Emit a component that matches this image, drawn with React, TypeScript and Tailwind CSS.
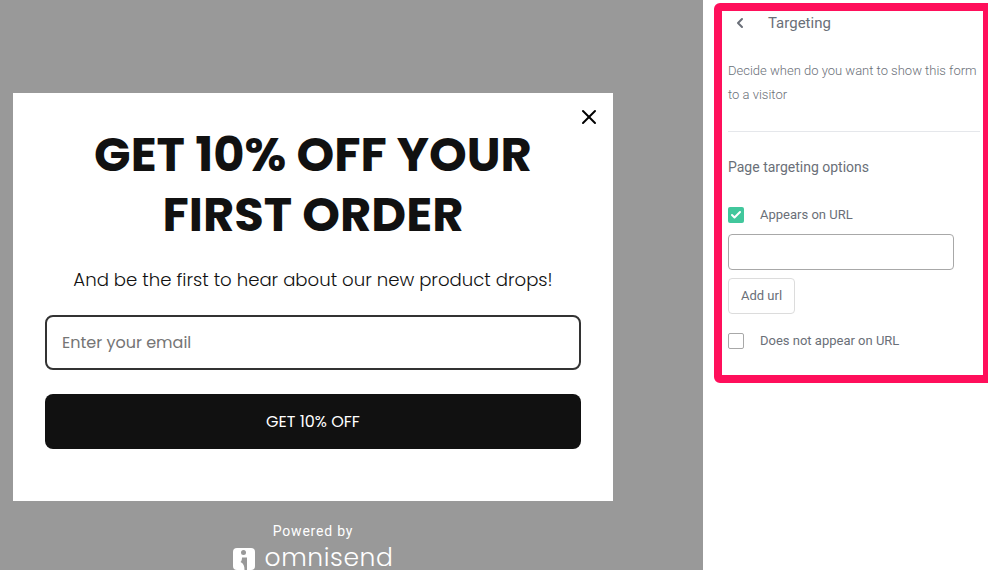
import { ChevronLeft, Check, X } from "lucide-react";

const poppins = "font-['Poppins','Inter','Noto_Sans',sans-serif]";

function PopupPreview() {
  return (
    <div className="flex h-full w-[703px] shrink-0 flex-col bg-[#999999] pl-[13px] pt-[93px]">
      <div className="relative flex h-[408px] w-[600px] shrink-0 flex-col items-center bg-white px-8 pt-[32px]">
        <button className="absolute right-[12px] top-[12px] text-black">
          <X size={24} strokeWidth={2} />
        </button>
        <h1 className={`${poppins} text-center text-[48px] font-bold leading-[60px] text-[#111111]`}>
          GET 10% OFF YOUR
          <br />
          FIRST ORDER
        </h1>
        <p className={`${poppins} mt-[19px] text-[18.12px] font-light leading-[32px] text-[#111111]`}>
          And be the first to hear about our new product drops!
        </p>
        <div className="mt-[19px] flex h-[55px] w-[536px] shrink-0 items-center rounded-lg border-2 border-[#333333] px-[15px]">
          <span className={`${poppins} text-[16px] text-[#757575]`}>Enter your email</span>
        </div>
        <button className={`${poppins} mt-6 flex h-[55px] w-[536px] shrink-0 items-center justify-center rounded-lg bg-[#111111] text-[16px] text-white`}>
          GET 10% OFF
        </button>
      </div>
      <div className="flex w-[600px] flex-col items-center pt-[22px]">
        <span className="font-['Roboto',sans-serif] text-sm leading-4 tracking-[0.8px] text-white">Powered by</span>
        <div className="mt-[3px] flex items-center gap-[10px]">
          <svg width="22" height="22" viewBox="0 0 22 22" className="mt-[2px]">
            <rect width="22" height="22" rx="4" fill="#fff" />
            <circle cx="10.5" cy="4.5" r="2.5" fill="#999999" />
            <path d="M9 9.5h5V22h-2.5c0-4-1-6.500-4-8 1-1 1.500-2.500 1.500-4.500z" fill="#999999" />
          </svg>
          <span className={`${poppins} text-[25px] font-light leading-8 tracking-[0.6px] text-white`}>omnisend</span>
        </div>
      </div>
    </div>
  );
}

function TargetingPanel() {
  return (
    <div className="flex-1 bg-white pl-[11px] pt-[3px]">
      <div className="h-[380px] w-[274px] rounded-tl-md rounded-bl-md border-y-8 border-l-8 border-r-[5px] border-[#ff0f5b] bg-white font-['Roboto',sans-serif] pl-[6px] pr-[3px]">
        {/* Header */}
        <div className="flex items-center pt-[2px] text-[#6a6f78]">
          <ChevronLeft size={16} strokeWidth={3} className="ml-1" />
          <span className="ml-[20px] text-[15px] leading-5">Targeting</span>
        </div>

        <p className="mt-[26px] text-[13px] font-light leading-6 text-[#6a6f78]">
          Decide when do you want to show this form to a visitor
        </p>
        <div className="mt-[24px] border-t border-[#e5e7eb]" />
        <p className="mt-[25px] text-sm leading-5 text-[#6a6f78]">Page targeting options</p>

        <div className="mt-[30px] flex items-center">
          <span className="flex h-4 w-4 items-center justify-center rounded-[2px] bg-[#41c79c] text-white">
            <Check size={12} strokeWidth={4} />
          </span>
          <span className="ml-4 text-[13px] leading-4 text-[#6a6f78]">Appears on URL</span>
        </div>
        <div className="mt-[11px] h-9 w-[226px] rounded border border-[#a8a8a8]" />
        <button className="mt-[8px] flex h-9 w-[67px] items-center justify-center rounded border border-[#dcdcdc] text-[13px] text-[#6a6f78]">
          Add url
        </button>
        <div className="mt-[19px] flex items-center">
          <span className="h-4 w-4 rounded-[2px] border border-[#a8a8a8]" />
          <span className="ml-4 text-[13px] leading-4 text-[#6a6f78]">Does not appear on URL</span>
        </div>
      </div>
    </div>
  );
}

export default function App() {
  return (
    <div className="flex h-[570px] w-[988px] overflow-hidden bg-white">
      <PopupPreview />
      <TargetingPanel />
    </div>
  );
}
